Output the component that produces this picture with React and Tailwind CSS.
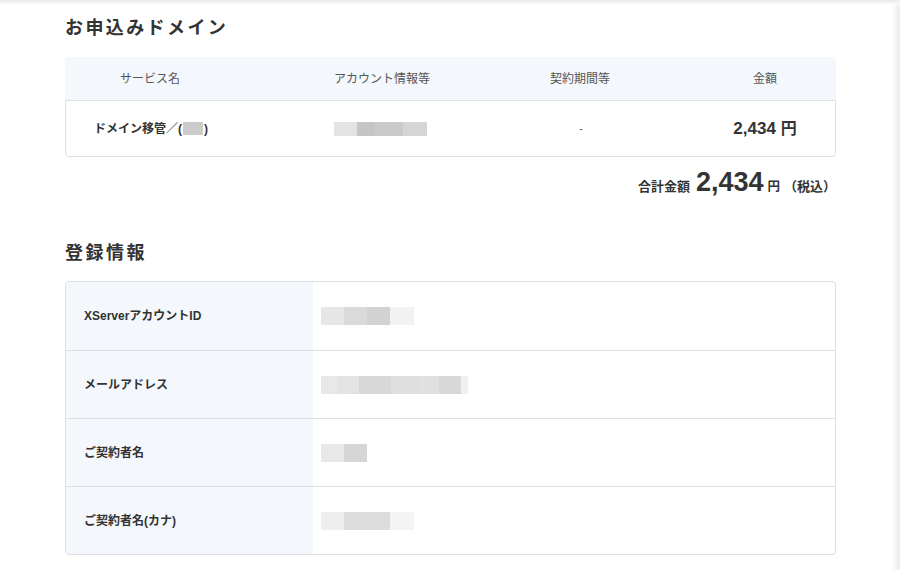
const jp = { fontFamily: '"Liberation Sans", "Noto Sans CJK JP", sans-serif' };

function Blur({ segs, h = "h-[18px]" }) {
  // モザイク部分
  return (
    <div className={`flex ${h}`}>
      {segs.map(([w, c], i) => (
        <div key={i} style={{ width: w, background: c }} />
      ))}
    </div>
  );
}

const regRows = [
  {
    label: "XServerアカウントID",
    segs: [[23, "#e6e6e6"], [23, "#dadada"], [23, "#d2d2d2"], [24, "#f2f2f2"]],
  },
  {
    label: "メールアドレス",
    segs: [[17, "#e8e8e8"], [21, "#e3e3e3"], [32, "#d8d8d8"], [27, "#dedede"], [21, "#e0e0e0"], [22, "#d8d8d8"], [7, "#f0f0f0"]],
  },
  {
    label: "ご契約者名",
    segs: [[23, "#e8e8e8"], [23, "#d6d6d6"]],
  },
  {
    label: "ご契約者名(カナ)",
    segs: [[23, "#eeeeee"], [46, "#dcdcdc"], [24, "#f4f4f4"]],
  },
];

export default function App() {
  return (
    <div className="w-[900px] h-[570px] bg-white flex flex-col overflow-hidden text-[#333]" style={jp}>
      <div className="h-[5px] bg-gradient-to-b from-[#e9e9e9] to-white" />
      <div className="flex flex-1">
        <div className="flex-1 pl-[65px] pr-[56px]">
          {/* お申込みドメイン */}
          <h2 className="text-[18px] font-bold tracking-[2.4px] leading-[28px] mt-[9px]">
            お申込みドメイン
          </h2>
          <div className="mt-[15px] w-[771px]">
            <div className="flex h-[43px] items-center bg-[#f4f8fc] rounded-t text-[12px] text-[#555]">
              <div className="w-[170px] text-center">サービス名</div>
              <div className="w-[294px] text-center">アカウント情報等</div>
              <div className="w-[102px] text-center">契約期間等</div>
              <div className="flex-1" />
              <div className="w-[142px] text-center">金額</div>
            </div>
            <div className="flex h-[57px] items-center border border-[#dcdfe3] rounded-b">
              <div className="w-[170px] flex justify-center items-center text-[12px] font-bold">
                <span>ドメイン移管／(</span>
                <span className="w-[20px] h-[13px] bg-[#cbcbcb] mx-[1px]" />
                <span>)</span>
              </div>
              <div className="w-[288px] flex justify-center">
                <Blur h="h-[14px]" segs={[[23, "#e3e3e3"], [18, "#c5c5c5"], [28, "#cacaca"], [24, "#d5d5d5"]]} />
              </div>
              <div className="w-[108px] pl-[6px] text-center text-[12px] text-[#777]">-</div>
              <div className="flex-1" />
              <div className="w-[140px] text-center text-[17px] font-bold">
                2,434 <span className="text-[16px]">円</span>
              </div>
            </div>
          </div>
          <div className="w-[771px] flex justify-end items-baseline pr-0 mt-[8px] font-bold">
            <span className="text-[13px]">合計金額</span>
            <span className="text-[27px] ml-[6px] leading-[34px]">2,434</span>
            <span className="text-[12.5px] ml-[4px]">円</span>
            <span className="text-[13px] ml-[4px]">（税込）</span>
          </div>

          {/* 登録情報 */}
          <h2 className="text-[18px] font-bold tracking-[2.5px] leading-[28px] mt-[40px]">
            登録情報
          </h2>
          <div className="mt-[14px] w-[771px] border border-[#dcdfe3] rounded overflow-hidden">
            {regRows.map((r, i) => (
              <div
                key={r.label}
                className={`flex h-[68px] ${i > 0 ? "border-t border-[#dcdfe3]" : ""}`}
              >
                <div className="w-[247px] bg-[#f4f8fc] flex items-center pl-[18px] text-[12px] font-bold">
                  {r.label}
                </div>
                <div className="flex-1 flex items-center pl-[8px]">
                  <Blur segs={r.segs} />
                </div>
              </div>
            ))}
          </div>
        </div>
        <div className="w-[9px] bg-gradient-to-r from-white to-[#ebebeb]" />
      </div>
    </div>
  );
}
